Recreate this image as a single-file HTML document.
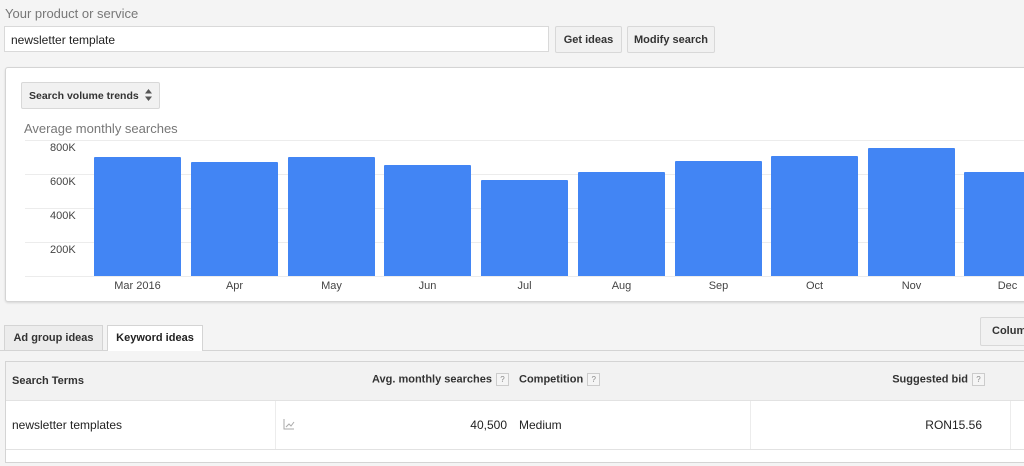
<!DOCTYPE html>
<html><head><style>
body{margin:0;width:1024px;height:466px;background:#f4f4f4;font-family:"Liberation Sans",Arial,sans-serif;position:relative;overflow:hidden;color:#222}
.a{position:absolute}
.btn{position:absolute;background:#f1f1f1;border:1px solid #d8d8d8;border-radius:2px;font-size:11px;font-weight:bold;color:#333;text-align:center;box-sizing:border-box}
.grid{position:absolute;left:25px;right:0;height:1px;background:#ececec}
.yl{position:absolute;left:50px;font-size:11px;color:#444}
.bar{position:absolute;background:#4285f4;width:87px;border-radius:1px 1px 0 0}
.xl{position:absolute;top:280px;width:87px;text-align:center;font-size:11px;color:#444}
.q{display:inline-block;width:11px;height:11px;border:1px solid #ccc;background:#f5f5f5;font-size:8px;color:#888;text-align:center;line-height:11px;vertical-align:middle;margin-left:4px;font-weight:normal}
</style></head><body>
<div class="a" style="left:5px;top:6px;font-size:13px;color:#777">Your product or service</div>
<div class="a" style="left:4px;top:26px;width:545px;height:26px;background:#fff;border:1px solid #d9d9d9;box-sizing:border-box;font-size:12px;padding:6px 0 0 6px">newsletter template</div>
<div class="btn" style="left:555px;top:26px;width:67px;height:27px;line-height:26px">Get ideas</div>
<div class="btn" style="left:627px;top:26px;width:88px;height:27px;line-height:26px">Modify search</div>

<div class="a" style="left:5px;top:67px;width:1030px;height:233px;background:#fff;border:1px solid #d4d4d4;border-radius:3px;box-shadow:0 1px 2px rgba(0,0,0,.12)"></div>
<div class="btn" style="left:21px;top:82px;width:139px;height:27px;line-height:26px;text-align:left;padding-left:7px;font-size:10.5px">Search volume trends</div>
<svg class="a" style="left:145px;top:89px" width="7" height="12"><path d="M3.5 0L7 4.5H0Z M3.5 12L7 7.5H0Z" fill="#555"/></svg>
<div class="a" style="left:24px;top:121px;font-size:13px;color:#777">Average monthly searches</div>
<div class="grid" style="top:140px"></div>
<div class="grid" style="top:174px"></div>
<div class="grid" style="top:208px"></div>
<div class="grid" style="top:242px"></div>
<div class="grid" style="top:276px"></div>
<div class="yl" style="top:142px">800K</div>
<div class="yl" style="top:176px">600K</div>
<div class="yl" style="top:210px">400K</div>
<div class="yl" style="top:244px">200K</div>
<div class="bar" style="left:94px;top:157px;height:119px"></div>
<div class="bar" style="left:191px;top:162px;height:114px"></div>
<div class="bar" style="left:288px;top:157px;height:119px"></div>
<div class="bar" style="left:384px;top:165px;height:111px"></div>
<div class="bar" style="left:481px;top:180px;height:96px"></div>
<div class="bar" style="left:578px;top:172px;height:104px"></div>
<div class="bar" style="left:675px;top:161px;height:115px"></div>
<div class="bar" style="left:771px;top:156px;height:120px"></div>
<div class="bar" style="left:868px;top:148px;height:128px"></div>
<div class="bar" style="left:964px;top:172px;height:104px"></div>
<div class="xl" style="left:94px">Mar 2016</div>
<div class="xl" style="left:191px">Apr</div>
<div class="xl" style="left:288px">May</div>
<div class="xl" style="left:384px">Jun</div>
<div class="xl" style="left:481px">Jul</div>
<div class="xl" style="left:578px">Aug</div>
<div class="xl" style="left:675px">Sep</div>
<div class="xl" style="left:771px">Oct</div>
<div class="xl" style="left:868px">Nov</div>
<div class="xl" style="left:964px">Dec</div>

<div class="a" style="left:0;top:350px;width:1024px;height:1px;background:#d4d4d4"></div>
<div class="a" style="left:4px;top:325px;width:99px;height:25px;background:#ececec;border:1px solid #d4d4d4;border-bottom:none;box-sizing:border-box;font-size:11px;font-weight:bold;text-align:center;line-height:25px;color:#333">Ad group ideas</div>
<div class="a" style="left:107px;top:325px;width:96px;height:26px;background:#fff;border:1px solid #d4d4d4;border-bottom:none;box-sizing:border-box;font-size:11px;font-weight:bold;text-align:center;line-height:25px;color:#222">Keyword ideas</div>
<div class="btn" style="left:980px;top:317px;width:60px;height:29px;line-height:27px;text-align:left;padding-left:11px">Columns</div>

<div class="a" style="left:5px;top:361px;width:1030px;height:102px;background:#fff;border:1px solid #d4d4d4;box-sizing:border-box"></div>
<div class="a" style="left:6px;top:362px;width:1030px;height:38px;background:#f2f2f2;border-bottom:1px solid #e2e2e2"></div>
<div class="a" style="left:12px;top:375px;font-size:11px;font-weight:bold;color:#333">Search Terms</div>
<div class="a" style="left:300px;width:209px;top:373px;font-size:11px;font-weight:bold;color:#333;text-align:right">Avg. monthly searches<span class="q">?</span></div>
<div class="a" style="left:519px;top:373px;font-size:11px;font-weight:bold;color:#333">Competition<span class="q">?</span></div>
<div class="a" style="left:800px;width:185px;top:373px;font-size:11px;font-weight:bold;color:#333;text-align:right">Suggested bid<span class="q">?</span></div>
<div class="a" style="left:6px;top:449px;width:1030px;height:1px;background:#e2e2e2"></div>
<div class="a" style="left:275px;top:401px;width:1px;height:48px;background:#ececec"></div>
<div class="a" style="left:750px;top:401px;width:1px;height:48px;background:#ececec"></div>
<div class="a" style="left:1010px;top:401px;width:1px;height:48px;background:#ececec"></div>
<div class="a" style="left:12px;top:418px;font-size:12px">newsletter templates</div>
<svg class="a" style="left:283px;top:419px" width="12" height="11"><path d="M1 0V10H11M3 8L6 5L8 7L11 3" fill="none" stroke="#aaa" stroke-width="1"/></svg>
<div class="a" style="left:400px;width:107px;top:418px;font-size:12px;text-align:right">40,500</div>
<div class="a" style="left:519px;top:418px;font-size:12px">Medium</div>
<div class="a" style="left:800px;width:182px;top:418px;font-size:12px;text-align:right">RON15.56</div>
</body></html>
